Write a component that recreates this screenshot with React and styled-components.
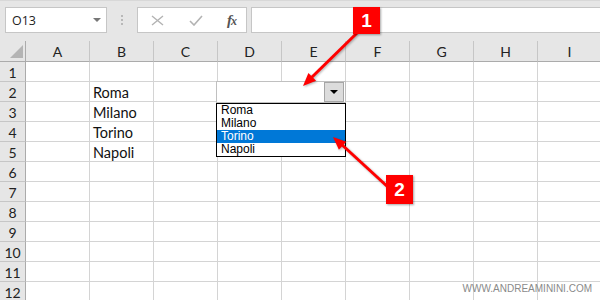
import React from "react";
import styled, { createGlobalStyle } from "styled-components";

const GlobalStyle = createGlobalStyle`
  html, body {
    margin: 0;
    padding: 0;
    background: #ffffff;
    overflow: hidden;
  }
`;

const Page = styled.div`
  position: relative;
  width: 600px;
  height: 300px;
  overflow: hidden;
  background: #ffffff;
  font-family: "Liberation Sans", Arial, sans-serif;
`;

const Toolbar = styled.div`
  display: flex;
  align-items: flex-start;
  box-sizing: border-box;
  height: 41px;
  padding: 6px 0 0 5px;
  background: #e6e6e6;
  border-top: 1px solid #d8d8d8;
`;

const NameBox = styled.div`
  box-sizing: border-box;
  width: 102px;
  height: 26px;
  display: flex;
  align-items: center;
  justify-content: space-between;
  padding: 0 5px 0 6px;
  background: #ffffff;
  border: 1px solid #c6c6c6;
  font-family: "Open Sans", sans-serif;
  font-size: 12.5px;
  color: #222;
`;

const SmallCaret = styled.span`
  width: 0;
  height: 0;
  border-left: 4px solid transparent;
  border-right: 4px solid transparent;
  border-top: 4px solid #777;
`;

const Grip = styled.div`
  width: 30px;
  height: 26px;
  display: flex;
  flex-direction: column;
  align-items: center;
  justify-content: center;
  gap: 2px;

  span {
    width: 2px;
    height: 2px;
    background: #b8b8b8;
  }
`;

const FxBox = styled.div`
  box-sizing: border-box;
  width: 110px;
  height: 26px;
  display: flex;
  align-items: center;
  padding: 0 10px 0 13px;
  justify-content: space-between;
  background: #ffffff;
  border: 1px solid #c6c6c6;
`;

const Fx = styled.span`
  font-family: "Liberation Serif", serif;
  font-style: italic;
  font-weight: bold;
  font-size: 15px;
  color: #555;
  letter-spacing: -1px;

  small {
    font-size: 12px;
  }
`;

const FormulaInput = styled.div`
  box-sizing: border-box;
  flex: 1;
  margin-left: 4px;
  height: 26px;
  background: #ffffff;
  border: 1px solid #c6c6c6;
  border-right: none;
`;

const Row = styled.div`
  display: flex;
  height: ${(p) => (p.$header ? 21 : 20)}px;
  background: ${(p) => (p.$header ? "#e6e6e6" : "#ffffff")};
`;

const Corner = styled.div`
  box-sizing: border-box;
  width: 26px;
  flex: none;
  border-right: 1px solid #ababab;
  border-bottom: 1px solid #ababab;
  display: flex;
  align-items: flex-end;
  justify-content: flex-end;
  padding: 0 2px 3px 0;
`;

const ColHead = styled.div`
  box-sizing: border-box;
  width: 64px;
  flex: none;
  border-right: 1px solid #c6c6c6;
  border-bottom: 1px solid #ababab;
  text-align: center;
  font-family: Lato, sans-serif;
  font-size: 14px;
  line-height: 21px;
  color: #222;
`;

const RowHead = styled.div`
  box-sizing: border-box;
  width: 26px;
  flex: none;
  background: #e6e6e6;
  border-right: 1px solid #ababab;
  border-bottom: 1px solid #c6c6c6;
  text-align: center;
  font-family: Lato, sans-serif;
  font-size: 14px;
  line-height: 21px;
  color: #222;
`;

const Cell = styled.div`
  box-sizing: border-box;
  width: 64px;
  flex: none;
  border-right: 1px solid #d4d4d4;
  border-bottom: 1px solid #d4d4d4;
  padding-left: 3px;
  font-family: Lato, sans-serif;
  font-size: 14.5px;
  line-height: 21px;
  color: #111;
  white-space: nowrap;
`;

const Dropdown = styled.div`
  position: absolute;
  left: 216px;
  top: 81px;
  width: 130px;
  display: flex;
  flex-direction: column;
`;

const Combo = styled.div`
  box-sizing: border-box;
  height: 22px;
  display: flex;
  justify-content: flex-end;
  align-items: center;
  padding-right: 1px;
  background: #ffffff;
  border: 1px solid #c0c0c0;
`;

const ComboButton = styled.div`
  box-sizing: border-box;
  width: 20px;
  height: 20px;
  display: flex;
  align-items: center;
  justify-content: center;
  background: #dcdcdc;
  border: 1px solid #a6a6a6;

  span {
    width: 0;
    height: 0;
    border-left: 4px solid transparent;
    border-right: 4px solid transparent;
    border-top: 4px solid #000;
  }
`;

const List = styled.div`
  box-sizing: border-box;
  background: #ffffff;
  border: 1px solid #000;
`;

const Item = styled.div`
  height: 13px;
  padding-left: 4px;
  font-family: "Liberation Sans", Arial, sans-serif;
  font-size: 12px;
  line-height: 13px;
  color: ${(p) => (p.$active ? "#ffffff" : "#000")};
  background: ${(p) => (p.$active ? "#0078d7" : "transparent")};
`;

const Callout = styled.div`
  position: absolute;
  left: ${(p) => p.$x}px;
  top: ${(p) => p.$y}px;
  width: 27px;
  height: ${(p) => p.$h}px;
  background: #ff0000;
  color: #ffffff;
  display: flex;
  align-items: center;
  justify-content: center;
  font-family: "Liberation Sans", Arial, sans-serif;
  font-weight: bold;
  font-size: 19px;
  box-shadow: 1px 1px 2px rgba(0, 0, 0, 0.35);
`;

const Arrows = styled.svg`
  position: absolute;
  left: 0;
  top: 0;
  pointer-events: none;
  filter: drop-shadow(1px 1px 1px rgba(0, 0, 0, 0.3));
`;

const Watermark = styled.div`
  position: absolute;
  right: 8px;
  top: 283px;
  font-family: "Liberation Sans", Arial, sans-serif;
  font-size: 10px;
  color: #8a8a8a;
`;

const columns = ["A", "B", "C", "D", "E", "F", "G", "H", "I"];
const cities = { 2: "Roma", 3: "Milano", 4: "Torino", 5: "Napoli" };
const rows = Array.from({ length: 12 }, (_, i) => i + 1);

export default function App() {
  return (
    <Page>
      <GlobalStyle />
      <Toolbar>
        <NameBox>
          O13
          <SmallCaret />
        </NameBox>
        <Grip>
          <span />
          <span />
          <span />
        </Grip>
        <FxBox>
          <svg width="13" height="11" viewBox="0 0 13 11">
            <path d="M1 1 L12 10 M12 1 L1 10" stroke="#b3b3b3" strokeWidth="1.4" fill="none" />
          </svg>
          <svg width="14" height="11" viewBox="0 0 14 11">
            <path d="M1 6 L5 10 L13 1" stroke="#b3b3b3" strokeWidth="1.6" fill="none" />
          </svg>
          <Fx>
            f<small>x</small>
          </Fx>
        </FxBox>
        <FormulaInput />
      </Toolbar>

      <Row $header>
        <Corner>
          <svg width="13" height="13" viewBox="0 0 13 13">
            <path d="M13 0 L13 13 L0 13 Z" fill="#b4b4b4" />
          </svg>
        </Corner>
        {columns.map((c) => (
          <ColHead key={c}>{c}</ColHead>
        ))}
      </Row>
      {rows.map((r) => (
        <Row key={r}>
          <RowHead>{r}</RowHead>
          {columns.map((c) => (
            <Cell key={c}>{c === "B" ? cities[r] : ""}</Cell>
          ))}
        </Row>
      ))}

      <Dropdown>
        <Combo>
          <ComboButton>
            <span />
          </ComboButton>
        </Combo>
        <List>
          <Item>Roma</Item>
          <Item>Milano</Item>
          <Item $active>Torino</Item>
          <Item>Napoli</Item>
        </List>
      </Dropdown>

      <Arrows width="600" height="300" viewBox="0 0 600 300">
        <line x1="357" y1="33" x2="310" y2="79" stroke="#ff0000" strokeWidth="3" />
        <polygon points="303,86 316.1,80.8 308.4,73" fill="#ff0000" />
        <line x1="389" y1="188" x2="340" y2="143" stroke="#ff0000" strokeWidth="3" />
        <polygon points="333,137 346.3,141.7 338.9,149.8" fill="#ff0000" />
      </Arrows>
      <Callout $x={353} $y={7} $h={27}>1</Callout>
      <Callout $x={386} $y={175} $h={29}>2</Callout>

      <Watermark>WWW.ANDREAMININI.COM</Watermark>
    </Page>
  );
}
